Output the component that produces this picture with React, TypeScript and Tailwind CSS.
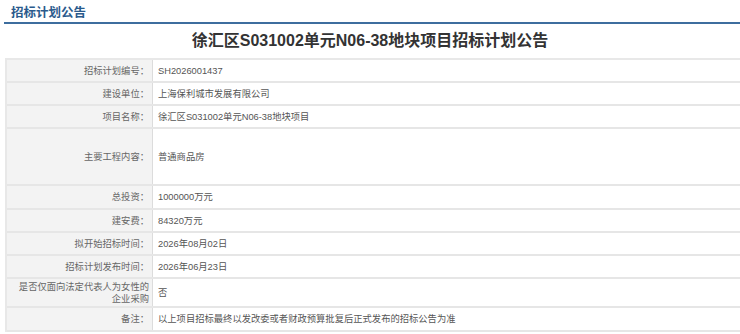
const ROWS: { label: React.ReactNode; value: string; h: string }[] = [
  { label: "招标计划编号：", value: "SH2026001437", h: "h-[23px]" },
  { label: "建设单位：", value: "上海保利城市发展有限公司", h: "h-[23px]" },
  { label: "项目名称：", value: "徐汇区S031002单元N06-38地块项目", h: "h-[23px]" },
  { label: "主要工程内容：", value: "普通商品房", h: "h-[57px]" },
  { label: "总投资：", value: "1000000万元", h: "h-[24px]" },
  { label: "建安费：", value: "84320万元", h: "h-[23px]" },
  { label: "拟开始招标时间：", value: "2026年08月02日", h: "h-[23px]" },
  { label: "招标计划发布时间：", value: "2026年06月23日", h: "h-[23px]" },
  {
    label: (
      <>
        是否仅面向法定代表人为女性的
        <br />
        企业采购
      </>
    ),
    value: "否",
    h: "h-[29px]",
  },
  { label: "备注：", value: "以上项目招标最终以发改委或者财政预算批复后正式发布的招标公告为准", h: "h-[24px]" },
];

export default function App() {
  return (
    <div
      className="h-[334px] w-[740px] overflow-hidden bg-white"
      style={{ fontFamily: '"Liberation Sans", "Noto Sans CJK SC", sans-serif' }}
    >
      {/* 栏目标题 */}
      <div className="ml-[4px] border-b-2 border-[#3d6d9e] pt-[6px] pb-[1px] pl-[7px] text-[12.5px] leading-[15px] font-bold text-[#2a5a8c]">
        招标计划公告
      </div>

      {/* 公告标题 */}
      <h1 className="pt-[7px] pb-[7px] text-center text-[16px] leading-[20px] font-bold text-[#333]">
        徐汇区S031002单元N06-38地块项目招标计划公告
      </h1>

      {/* 信息表 */}
      <div className="ml-[5px] w-[760px] border-t-2 border-l-2 border-[#e8e8e8] text-[9.3px] leading-[12px]">
        {ROWS.map((row, i) => (
          <div key={i} className={`flex border-b-2 border-[#e6e6e6] ${row.h}`}>
            <div className="flex w-[146px] shrink-0 items-center justify-end border-r border-[#dcdcdc] bg-[#f3f3f3] pr-[3px] text-right text-[#666]">
              {row.label}
            </div>
            <div className="flex flex-1 items-center pl-[5px] text-[#555]">{row.value}</div>
          </div>
        ))}
      </div>
    </div>
  );
}
